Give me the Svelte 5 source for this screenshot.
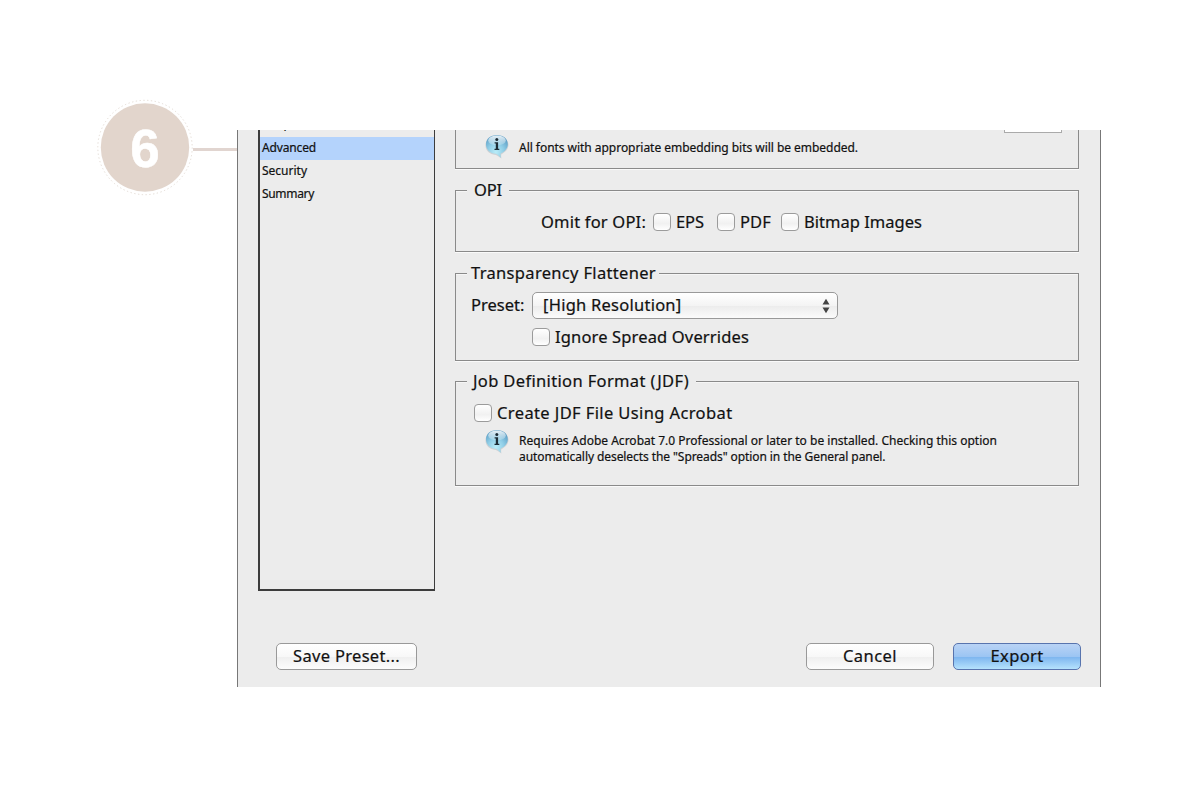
<script lang="ts">
	const pages = [
		{ caption: 'Output', width: 41 },
		{ caption: 'Advanced', width: 54 },
		{ caption: 'Security', width: 45 },
		{ caption: 'Summary', width: 52 },
	];
	let selected = $state('Advanced');

	const opiOptions = [
		{ caption: 'EPS', width: 28 },
		{ caption: 'PDF', width: 31 },
		{ caption: 'Bitmap Images', width: 118 },
	];

	// tracks the letters so that a caption takes the given width
	function fit(node: HTMLElement, width: number) {
		const chars = node.textContent.length;
		const natural = node.getBoundingClientRect().width;
		node.style.letterSpacing = `${(width - natural) / chars}px`;
	}
</script>

{#snippet infoIcon()}
	<svg class="info" width="24" height="25" viewBox="0 0 24 25">
		<defs>
			<radialGradient id="bubble" cx="45%" cy="75%" r="75%">
				<stop offset="0" stop-color="#b9ecf8" />
				<stop offset="0.5" stop-color="#8fcde6" />
				<stop offset="1" stop-color="#5b9cc4" />
			</radialGradient>
			<linearGradient id="gloss" x1="0" y1="0" x2="0" y2="1">
				<stop offset="0" stop-color="#fff" stop-opacity="0.85" />
				<stop offset="1" stop-color="#fff" stop-opacity="0.15" />
			</linearGradient>
		</defs>
		<path d="M12 2C5.500 2 .5 5.700 .5 11.200s4 9.100 10.300 9.700c1.500.4 2.800 1.800 5.700 3.600-.5-1.700-.5-2.800-.1-4.300C20 18.300 23.500 15 23.500 10.700 23.500 5.700 18.500 2 12 2z" fill="#9eabb2" opacity="0.4" />
		<path d="M12 1C5.700 1 1 4.700 1 10.200s4.200 9.100 9.800 9.600c1.300.3 2.600 1.900 5.100 3.900-.5-1.700-.5-2.900-.1-4.400C19.600 17.800 22.800 14.500 22.800 10.200 22.800 4.700 18.300 1 12 1z" fill="url(#bubble)" />
		<ellipse cx="12" cy="6.500" rx="8.800" ry="5" fill="url(#gloss)" />
		<circle cx="11.800" cy="5.500" r="1.500" fill="#1c2c35" />
		<path d="M9.600 8.300h3.500v6.500h1.200v1.100H9.500v-1.100h1.300V9.400H9.600z" fill="#1c2c35" />
	</svg>
{/snippet}

<div class="page">
	<div class="step">
		<div class="badge">
			<svg class="ring" width="96" height="96" viewBox="0 0 96 96">
				<circle cx="48" cy="47.500" r="47.200" fill="none" stroke="#e4dcd5" stroke-width="1" stroke-dasharray="1.300 2.500" />
				<circle cx="48" cy="47.500" r="44.200" fill="#e2d5cc" />
			</svg>
			<span class="number">6</span>
		</div>
		<div class="connector"></div>
	</div>

	<div class="dialog">
		<div class="content">
			<div class="pages">
				{#each pages as page}
					<div class="item" class:selected={selected == page.caption} onclick={() => (selected = page.caption)} role="none">
						<span use:fit={page.width}>{page.caption}</span>
					</div>
				{/each}
			</div>

			<div class="groups">
				<section class="group fonts">
					<div class="percent"></div>
					<div class="note">
						{@render infoIcon()}
						<p><span use:fit={339}>All fonts with appropriate embedding bits will be embedded.</span></p>
					</div>
				</section>

				<section class="group opi">
					<h2 class="legend"><span use:fit={28}>OPI</span></h2>
					<div class="row">
						<span class="label" use:fit={105}>Omit for OPI:</span>
						{#each opiOptions as option}
							<div class="option"><i class="check"></i><span use:fit={option.width}>{option.caption}</span></div>
						{/each}
					</div>
				</section>

				<section class="group flattener">
					<h2 class="legend"><span use:fit={185}>Transparency Flattener</span></h2>
					<div class="row">
						<span class="label" use:fit={53.5}>Preset:</span>
						<div class="select">
							<span use:fit={138.5}>[High Resolution]</span>
							<svg width="8" height="16" viewBox="0 0 8 16"><path d="M4 .8l3.500 5.700H.5zM4 15.200L.5 9.500h7z" fill="#444" /></svg>
						</div>
					</div>
					<div class="option"><i class="check"></i><span use:fit={194}>Ignore Spread Overrides</span></div>
				</section>

				<section class="group jdf">
					<h2 class="legend"><span use:fit={216}>Job Definition Format (JDF)</span></h2>
					<div class="option"><i class="check"></i><span use:fit={235.5}>Create JDF File Using Acrobat</span></div>
					<div class="note">
						{@render infoIcon()}
						<p>
							<span use:fit={478}>Requires Adobe Acrobat 7.0 Professional or later to be installed. Checking this option</span><br />
							<span use:fit={366.5}>automatically deselects the "Spreads" option in the General panel.</span>
						</p>
					</div>
				</section>
			</div>
		</div>

		<div class="buttons">
			<button class="save"><span use:fit={107}>Save Preset...</span></button>
			<button><span use:fit={54}>Cancel</span></button>
			<button class="default"><span use:fit={53}>Export</span></button>
		</div>
	</div>
</div>

<style>
	:global(body) {
		background: #fff;
	}

	.page {
		box-sizing: border-box;
		width: 1200px;
		height: 787px;
		padding: 100px 0 0 97px;
		display: flex;
		align-items: flex-start;
		overflow: hidden;
		font-family: 'Noto Sans', 'Open Sans', sans-serif;
		font-size: 16.500px;
		color: #111;
		-webkit-text-stroke: 0.200px #111;
	}

	span {
		white-space: nowrap;
		display: inline-block;
	}

	.step {
		display: flex;
		align-items: center;
		width: 140px;
	}

	.badge {
		display: grid;
		place-items: center;
		width: 96px;
		height: 96px;
	}

	.badge > * {
		grid-area: 1 / 1;
	}

	.ring {
		overflow: visible;
	}

	.number {
		z-index: 1;
		margin-top: 2px;
		color: #fff;
		font: bold 53px/60px 'Liberation Sans', Arial, sans-serif;
		-webkit-text-stroke: 0.500px #fff;
	}

	.connector {
		flex: 1;
		height: 3px;
		margin-top: 2px;
		background: #e1d5d0;
	}

	.dialog {
		box-sizing: border-box;
		width: 864px;
		height: 557px;
		margin-top: 30px;
		overflow: hidden;
		background: #ececec;
		border-left: 1px solid #777;
		border-right: 1px solid #777;
	}

	.content {
		display: flex;
		height: 461px;
	}

	.pages {
		box-sizing: border-box;
		width: 177px;
		height: 477px;
		margin: -16px 0 0 20px;
		border: 2px solid #3c3c3c;
		border-top: 0;
		border-right-width: 1.500px;
		font-size: 12px;
	}

	.item {
		height: 23px;
		line-height: 22px;
		padding-left: 2px;
	}

	.item:first-child {
		line-height: 20px;
	}

	.selected {
		background: #b4d3fc;
	}

	.groups {
		width: 624px;
		margin-left: 20px;
	}

	.group {
		box-sizing: border-box;
		border: 1px solid #8a8a8a;
		box-shadow: 0 1px 0 #fafafa, inset 0 1px 0 #f6f6f6;
	}

	.legend {
		width: fit-content;
		height: 22px;
		margin: -12px 0 0 11px;
		line-height: 22px;
		font-size: inherit;
		font-weight: normal;
		background: #ececec;
	}

	.row,
	.option {
		display: flex;
		align-items: center;
	}

	.row > span,
	.option span {
		margin-top: -2px;
	}

	.check {
		box-sizing: border-box;
		width: 18px;
		height: 18px;
		margin-right: 5px;
		border: 1.500px solid #9b9b9b;
		border-radius: 4px;
		background: linear-gradient(#fff, #f1f1f1 60%, #fff);
	}

	.note {
		display: flex;
		align-items: flex-start;
		margin-left: 29px;
		font-size: 12px;
		line-height: 15.500px;
	}

	.info {
		margin-top: 0.500px;
	}

	.note p {
		margin: 0 0 0 10px;
	}

	.note span {
		vertical-align: top;
	}

	.fonts {
		height: 39px;
		border-top: 0;
		box-shadow: 0 1px 0 #fafafa;
	}

	.percent {
		box-sizing: border-box;
		width: 58px;
		height: 3px;
		margin-left: 548px;
		background: #fff;
		border: 1px solid #aaa;
		border-top: 0;
	}

	.fonts p {
		margin-top: 7px;
	}

	.opi {
		height: 62px;
		margin-top: 21px;
	}

	.opi .legend {
		padding: 0 7px;
	}

	.opi .row {
		height: 22px;
		margin: 10px 0 0 85px;
	}

	.opi .label {
		margin-right: 7px;
	}

	.opi .option {
		margin-right: 13px;
	}

	.opi .option:nth-of-type(2) {
		margin-right: 10px;
	}

	.flattener {
		height: 88px;
		margin-top: 21px;
	}

	.flattener .legend {
		padding: 0 3px 0 4px;
	}

	.flattener .row {
		height: 27px;
		margin: 8px 0 0 15px;
	}

	.flattener .option {
		height: 22px;
		margin: 7px 0 0 76px;
	}

	.select {
		box-sizing: border-box;
		display: flex;
		align-items: center;
		justify-content: space-between;
		width: 306px;
		height: 27px;
		margin-left: 7.500px;
		padding: 0 7px 0 10px;
		border: 1.500px solid #999;
		border-radius: 5px;
		background: linear-gradient(#fff, #f4f4f4 50%, #ececec 52%, #fbfbfb);
	}

	.select span {
		margin-top: -2px;
	}

	.jdf {
		height: 105px;
		margin-top: 20px;
	}

	.jdf .legend {
		padding: 0 7px 0 6px;
	}

	.jdf .option {
		height: 22px;
		margin: 10px 0 0 18px;
	}

	.jdf .note {
		margin-top: 4px;
	}

	.jdf p {
		margin-top: 5px;
	}

	.buttons {
		display: flex;
		margin: 52px 0 0 38px;
	}

	button {
		box-sizing: border-box;
		width: 128px;
		height: 27px;
		margin-right: 19px;
		padding: 0 0 2px;
		border: 1.500px solid #999;
		border-radius: 5px;
		background: linear-gradient(#fff, #f8f8f8 50%, #efefef 52%, #fcfcfc);
		color: inherit;
		font: inherit;
		line-height: 22px;
	}

	.save {
		width: 141px;
		margin-right: 389px;
	}

	.default {
		margin-right: 0;
		border-color: #5874ae;
		background: linear-gradient(#b9d3f5, #9cc5f3 50%, #7db5ef 52%, #b5e2fd);
	}
</style>
